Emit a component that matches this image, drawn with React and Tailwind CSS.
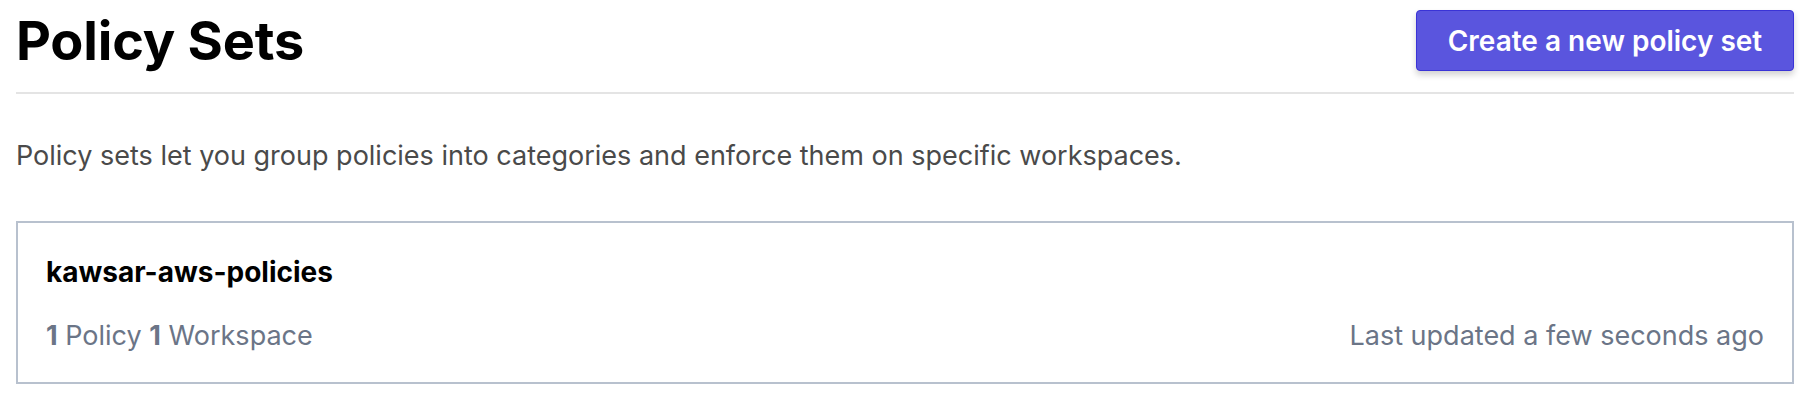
const App = () => {
    return (
        <div
            className="min-h-screen bg-white pl-[16px] pr-[18px]"
            style={{ fontFamily: "Inter, 'Noto Sans', sans-serif" }}
        >
            {/* Header */}
            <div className="flex items-center justify-between border-b-2 border-[#e4e4e4] pt-[10px] pb-[21px]">
                <h1 className="text-[54px] font-bold leading-[61px] tracking-[-0.2px] text-black">
                    Policy Sets
                </h1>
                <button className="h-[61px] w-[378px] rounded-[4px] border border-[#3a33d6] bg-[#5a55de] text-[28px] font-semibold text-white shadow-[0_4px_6px_rgba(0,0,0,0.18)]">
                    Create a new policy set
                </button>
            </div>

            {/* Description */}
            <p className="mt-[44px] text-[27px] leading-[36px] text-[#4a4a4a]">
                Policy sets let you group policies into categories and enforce them on specific workspaces.
            </p>

            {/* Policy set card */}
            <div className="mt-[47px] border-2 border-[#b8c1ce] px-[28px] pt-[31px] pb-[28px]">
                <div className="text-[28px] font-bold leading-[36px] text-black">
                    kawsar-aws-policies
                </div>
                <div className="mt-[28px] flex items-center justify-between text-[27px] leading-[36px] text-[#6b7587]">
                    <span>
                        <span className="font-bold">1</span> Policy{" "}
                        <span className="font-bold">1</span> Workspace
                    </span>
                    <span>Last updated a few seconds ago</span>
                </div>
            </div>
        </div>
    );
};

export default App;
